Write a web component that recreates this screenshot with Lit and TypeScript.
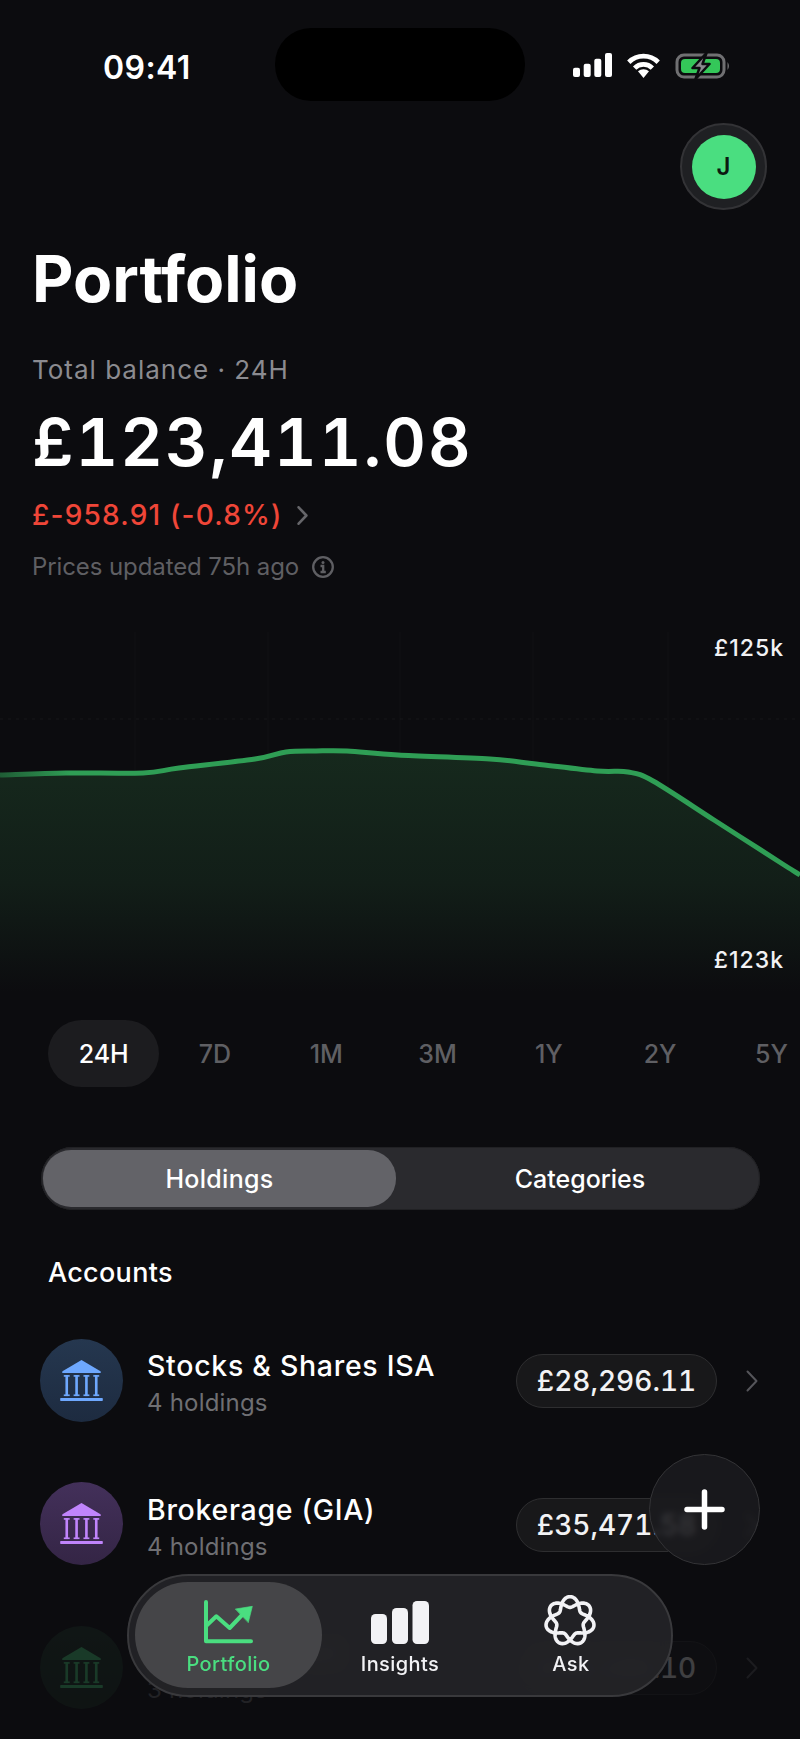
import { LitElement, css, html, svg } from 'lit';
import { customElement } from 'lit/decorators.js';

const RANGES = ['24H', '7D', '1M', '3M', '1Y', '2Y', '5Y'];

const ACCOUNTS = [
  { name: 'Stocks & Shares ISA', sub: '4 holdings', value: '£28,296.11', tone: 'blue' },
  { name: 'Brokerage (GIA)', sub: '4 holdings', value: '£35,471.58', tone: 'purple' },
  { name: 'Crypto Wallet', sub: '3 holdings', value: '£59,180.10', tone: 'green' },
];

// chart coords are page coords, the svg viewBox starts at y=632
const POINTS = [
  [-30, 776], [0, 775], [66, 773], [143, 773], [179, 768], [255, 759], [286, 752], [316, 751], [347, 751],
  [398, 755], [490, 759], [536, 764], [597, 771], [628, 772], [653, 781], [714, 820],
  [781, 863], [800, 875], [830, 895],
];

// catmull-rom through the sampled points
function smooth(p: number[][]) {
  let d = `M${p[1][0]} ${p[1][1]}`;
  for (let i = 1; i < p.length - 2; i++) {
    const c1x = p[i][0] + (p[i + 1][0] - p[i - 1][0]) / 6;
    const c1y = p[i][1] + (p[i + 1][1] - p[i - 1][1]) / 6;
    const c2x = p[i + 1][0] - (p[i + 2][0] - p[i][0]) / 6;
    const c2y = p[i + 1][1] - (p[i + 2][1] - p[i][1]) / 6;
    d += ` C${c1x.toFixed(1)} ${c1y.toFixed(1)} ${c2x.toFixed(1)} ${c2y.toFixed(1)} ${p[i + 1][0]} ${p[i + 1][1]}`;
  }
  return d;
}
const LINE = smooth(POINTS);

const bank = () => html`
  <svg class="bank" viewBox="0 0 130 125" fill="currentColor">
    <path d="M65 0 L123 34 Q126 40 120 40 L10 40 Q4 40 7 34 Z"/>
    ${[20, 50, 80, 110].map(x => svg`
      <rect x=${x - 4} y="46" width="8" height="64"/>
      <rect x=${x - 9} y="46" width="18" height="5"/>
      <rect x=${x - 9} y="105" width="18" height="5"/>
    `)}
    <rect x="0" y="116" width="130" height="9" rx="2"/>
  </svg>
`;

const chevron = (cls: string) => html`
  <svg class=${cls} viewBox="0 0 12 22" fill="none" stroke="currentColor" stroke-width="2" stroke-linecap="round" stroke-linejoin="round">
    <path d="M1.5 1.5 L10.5 11 L1.5 20.5"/>
  </svg>
`;

// rosette for the Ask tab: 7 lobes, the curve winds twice
function rosette() {
  let d = '';
  for (let i = 0; i <= 280; i++) {
    const t = (i / 280) * Math.PI * 4;
    const r = 19 + 5.4 * Math.cos(3.5 * t);
    const x = 26 + r * Math.sin(t);
    const y = 26 - r * Math.cos(t);
    d += `${i ? 'L' : 'M'}${x.toFixed(2)} ${y.toFixed(2)} `;
  }
  return d + 'Z';
}

@customElement('app-root')
export class AppRoot extends LitElement {
  static styles = css`
    :host {
      display: block;
      position: relative;
      width: 800px;
      height: 1739px;
      overflow: hidden;
      background: #0c0c0f;
      color: #fff;
      font-family: Inter, 'Liberation Sans', sans-serif;
      font-feature-settings: 'liga' 0, 'calt' 0;
    }

    .status {
      display: grid;
      grid-template-columns: 275px 250px 1fr;
      padding-top: 28px;
      height: 73px;
    }
    .time {
      padding-left: 103px;
      padding-top: 24px;
      font-size: 32px;
      line-height: 32px;
      font-weight: 600;
      letter-spacing: 0.4px;
    }
    .island {
      background: #000;
      border-radius: 36px;
    }
    .sys {
      display: flex;
      gap: 14px;
      padding: 25px 0 0 48px;
      align-items: flex-start;
    }
    .sys svg { display: block; }

    .top {
      display: flex;
      justify-content: flex-end;
      padding: 22px 33px 0 0;
    }
    .avatar {
      box-sizing: border-box;
      width: 87px;
      height: 87px;
      border-radius: 50%;
      background: #1f2023;
      border: 2px solid #333336;
      display: flex;
      align-items: center;
      justify-content: center;
    }
    .avatar span {
      width: 64px;
      height: 64px;
      border-radius: 50%;
      background: #4ade80;
      color: #0c1a10;
      font-size: 24px;
      font-weight: 600;
      display: flex;
      align-items: center;
      justify-content: center;
    }

    .head { padding: 36.5px 32px 0; }
    h1 {
      margin: 0;
      font-size: 64px;
      line-height: 64px;
      font-weight: 700;
    }
    .label {
      margin-top: 46px;
      font-size: 26px;
      line-height: 26px;
      color: #8b8b90;
      letter-spacing: 1px;
    }
    .balance {
      margin-top: 26.5px;
      font-size: 66px;
      line-height: 66px;
      font-weight: 600;
      letter-spacing: 2px;
      font-variant-numeric: tabular-nums;
    }
    .delta {
      margin-top: 26px;
      display: flex;
      align-items: center;
      gap: 13px;
      font-size: 28px;
      line-height: 28px;
      font-weight: 500;
      color: #ef4638;
      letter-spacing: 1.2px;
    }
    .delta-chev { width: 13px; height: 19px; color: #66666a; stroke-width: 3; }
    .updated {
      margin-top: 26px;
      display: flex;
      align-items: center;
      gap: 13px;
      font-size: 24px;
      line-height: 24px;
      color: #5f5f63;
      letter-spacing: -0.1px;
    }
    .updated svg { width: 22px; height: 22px; }

    .chart {
      position: relative;
      margin-top: 53px;
      height: 360px;
    }
    .chart svg { display: block; width: 800px; height: 360px; }
    .axis {
      position: absolute;
      right: 16px;
      font-size: 23px;
      line-height: 23px;
      font-weight: 500;
      letter-spacing: 1px;
      color: #f2f2f4;
    }
    .axis.hi { top: 5px; }
    .axis.lo { top: 317px; }

    .ranges {
      display: flex;
      margin-top: 28px;
      padding-left: 48px;
    }
    .ranges span {
      flex: 0 0 111.3px;
      height: 67px;
      border-radius: 34px;
      display: flex;
      align-items: center;
      justify-content: center;
      font-size: 25px;
      font-weight: 500;
      color: #5f5f63;
    }
    .ranges span.on {
      background: #1c1c1f;
      color: #fff;
    }

    .seg {
      box-sizing: border-box;
      display: grid;
      grid-template-columns: 353px 1fr;
      margin: 60px 40px 0 41px;
      height: 63px;
      padding: 3px 0 3px 2px;
      border-radius: 32px;
      background: #2a2a2e;
      box-shadow: inset 0 0 0 1px #212124;
      font-size: 25px;
      font-weight: 500;
    }
    .seg span {
      display: flex;
      align-items: center;
      justify-content: center;
      border-radius: 28px;
    }
    .seg span.on { background: #636368; letter-spacing: 0.3px; }
    .seg span + span { padding-left: 4px; }

    h2 {
      margin: 49px 0 0 48px;
      font-size: 27px;
      line-height: 27px;
      font-weight: 500;
      letter-spacing: 0.3px;
    }

    .rows {
      display: flex;
      flex-direction: column;
      gap: 59.5px;
      margin-top: 52px;
    }
    .row {
      display: flex;
      align-items: center;
      height: 84px;
      padding: 0 42px 0 40px;
    }
    .row.faded { opacity: 0.22; }
    .disc {
      flex: 0 0 83px;
      height: 83px;
      border-radius: 50%;
      display: flex;
      align-items: center;
      justify-content: center;
      margin-right: 24px;
    }
    .disc.blue { background: linear-gradient(#25374f, #1d2b40); color: #6ea8fe; }
    .disc.purple { background: linear-gradient(#43305a, #342545); color: #c084fc; }
    .disc.green { background: linear-gradient(#1f3a2b, #1a3124); color: #4ade80; }
    .bank { width: 43px; height: 41px; }
    .info { flex: 1; margin-top: 7.5px; }
    .name {
      font-size: 28.5px;
      line-height: 28px;
      font-weight: 500;
      letter-spacing: 0.7px;
    }
    .sub {
      margin-top: 11px;
      font-size: 24px;
      line-height: 24px;
      color: #6f6f73;
      letter-spacing: 0.2px;
    }
    .pill {
      box-sizing: border-box;
      width: 201px;
      height: 54px;
      margin-top: 2px;
      border-radius: 27px;
      background: #18181a;
      border: 1.5px solid #2e2e30;
      display: flex;
      align-items: center;
      justify-content: center;
      font-size: 28px;
      font-weight: 500;
      font-variant-numeric: tabular-nums;
      color: #f2f2f4;
    }
    .row-chev {
      width: 12px;
      height: 22px;
      margin: 2px 0 0 29px;
      color: #55555a;
    }

    .fab {
      position: absolute;
      left: 649px;
      top: 1454px;
      box-sizing: border-box;
      width: 111px;
      height: 111px;
      border-radius: 50%;
      background: rgba(27, 27, 30, 0.86);
      border: 1.5px solid #343437;
      backdrop-filter: blur(3px);
      display: flex;
      align-items: center;
      justify-content: center;
    }
    .fab svg { width: 41px; height: 41px; }

    .nav {
      position: absolute;
      left: 127px;
      top: 1574px;
      box-sizing: border-box;
      width: 546px;
      height: 123px;
      padding: 6px;
      border-radius: 62px;
      background: rgba(35, 35, 39, 0.93);
      border: 2px solid #39393c;
      backdrop-filter: blur(8px);
      display: grid;
      grid-template-columns: 187px 156px 186px;
    }
    .tab {
      display: flex;
      flex-direction: column;
      align-items: center;
      padding-top: 12px;
      height: 106px;
      box-sizing: border-box;
      border-radius: 53px;
      font-size: 20px;
      line-height: 20px;
      font-weight: 500;
      letter-spacing: 0.4px;
      color: #f2f2f5;
    }
    .tab.on {
      background: #454548;
      color: #4ade80;
    }
    .tab .ic {
      height: 50px;
      margin-bottom: 10px;
      display: flex;
      align-items: flex-end;
    }
    .tab .ros { margin: 0 0 -3px -2px; }
  `;

  render() {
    return html`
      <div class="status">
        <div class="time">09:41</div>
        <div class="island"></div>
        <div class="sys">
          <svg width="39" height="24" viewBox="0 0 39 24" fill="#fff">
            <rect x="0" y="14.7" width="7" height="9.3" rx="2"/>
            <rect x="10.7" y="10.7" width="7" height="13.3" rx="2"/>
            <rect x="21.3" y="5.7" width="7" height="18.3" rx="2"/>
            <rect x="32" y="0" width="7" height="24" rx="2"/>
          </svg>
          <svg width="35" height="25" viewBox="0 0 33 24" fill="none" stroke="#fff" stroke-width="4.5">
            <path d="M2.4 8.9 A20 20 0 0 1 30.6 8.9"/>
            <path d="M8 14.5 A12 12 0 0 1 25 14.5"/>
            <path d="M16.5 24 L11.2 17.5 A8 8 0 0 1 21.8 17.5 Z" fill="#fff" stroke="none"/>
          </svg>
          <svg width="57" height="26" viewBox="0 0 56 26" fill="none">
            <rect x="1.5" y="2" width="47" height="22" rx="7" stroke="#707072" stroke-width="3"/>
            <rect x="5.5" y="6" width="39" height="14" rx="4" fill="#34c759"/>
            <path d="M52 9 Q55 13 52 17 Z" fill="#707072"/>
            <path d="M31 0 L17 15 L24 15 L20 26 L34 11 L27 11 Z" fill="#8a8a8e" stroke="#0c0c0f" stroke-width="2.5" stroke-linejoin="round"/>
          </svg>
        </div>
      </div>

      <div class="top">
        <div class="avatar"><span>J</span></div>
      </div>

      <div class="head">
        <h1>Portfolio</h1>
        <div class="label">Total balance · 24H</div>
        <div class="balance">£123,411.08</div>
        <div class="delta">£-958.91 (-0.8%) ${chevron('delta-chev')}</div>
        <div class="updated">
          Prices updated 75h ago
          <svg viewBox="0 0 22 22" fill="none" stroke="#5f5f63" stroke-width="2.3">
            <circle cx="11" cy="11" r="9.8"/>
            <path d="M8.5 10 H11.2 V16 M8.5 16 H13.8"/>
            <circle cx="11" cy="6.4" r="1.5" fill="#5f5f63" stroke="none"/>
          </svg>
        </div>
      </div>

      <div class="chart">
        <svg viewBox="0 632 800 360" fill="none">
          <defs>
            <linearGradient id="area" x1="0" y1="0" x2="0" y2="1">
              <stop offset="0" stop-color="#16291d"/>
              <stop offset="0.55" stop-color="#121e18"/>
              <stop offset="1" stop-color="#0c0c0f"/>
            </linearGradient>
            <linearGradient id="stroke" gradientUnits="userSpaceOnUse" x1="0" y1="0" x2="70" y2="0">
              <stop offset="0" stop-color="#1f5c35"/>
              <stop offset="1" stop-color="#2f9e55"/>
            </linearGradient>
          </defs>
          ${[135, 268, 400, 533, 668].map(x => svg`<line x1=${x} y1="632" x2=${x} y2="992" stroke="#fff" stroke-opacity="0.025"/>`)}
          <line x1="0" y1="719" x2="800" y2="719" stroke="#fff" stroke-opacity="0.05" stroke-dasharray="3 5"/>
          <path d="${LINE} L800 992 L0 992 Z" fill="url(#area)"/>
          <path d=${LINE} stroke="url(#stroke)" stroke-width="5"/>
        </svg>
        <div class="axis hi">£125k</div>
        <div class="axis lo">£123k</div>
      </div>

      <div class="ranges">
        ${RANGES.map((r, i) => html`<span class=${i === 0 ? 'on' : ''}>${r}</span>`)}
      </div>

      <div class="seg">
        <span class="on">Holdings</span>
        <span>Categories</span>
      </div>

      <h2>Accounts</h2>

      <div class="rows">
        ${ACCOUNTS.map((a, i) => html`
          <div class="row ${i === 2 ? 'faded' : ''}">
            <div class="disc ${a.tone}">${bank()}</div>
            <div class="info">
              <div class="name">${a.name}</div>
              <div class="sub">${a.sub}</div>
            </div>
            <div class="pill">${a.value}</div>
            ${chevron('row-chev')}
          </div>
        `)}
      </div>

      <div class="fab">
        <svg viewBox="0 0 41 41" stroke="#fff" stroke-width="5.5" stroke-linecap="round">
          <path d="M20.5 3 V38 M3 20.5 H38"/>
        </svg>
      </div>

      <nav class="nav">
        <div class="tab on">
          <div class="ic">
            <svg width="50" height="44" viewBox="225 88 150 132" fill="none" stroke="#4ade80" stroke-width="12" stroke-linecap="round" stroke-linejoin="round">
              <path d="M231 94 V212 H366"/>
              <path d="M232 165 L262 137 L302 172 L342 130"/>
              <path d="M320 115 L370 107 L358 155 Z" fill="#4ade80" stroke-width="2"/>
            </svg>
          </div>
          Portfolio
        </div>
        <div class="tab">
          <div class="ic">
            <svg width="58" height="43" viewBox="0 0 58 43" fill="#f2f2f5">
              <rect x="0" y="13" width="16" height="30" rx="4.5"/>
              <rect x="21" y="7" width="16" height="36" rx="4.5"/>
              <rect x="41.5" y="0" width="16.5" height="43" rx="4.5"/>
            </svg>
          </div>
          Insights
        </div>
        <div class="tab">
          <div class="ic">
            <svg class="ros" width="52" height="52" viewBox="0 0 52 52" fill="none" stroke="#f2f2f5" stroke-width="3.6" stroke-linejoin="round">
              <path d=${rosette()}/>
            </svg>
          </div>
          Ask
        </div>
      </nav>
    `;
  }
}
